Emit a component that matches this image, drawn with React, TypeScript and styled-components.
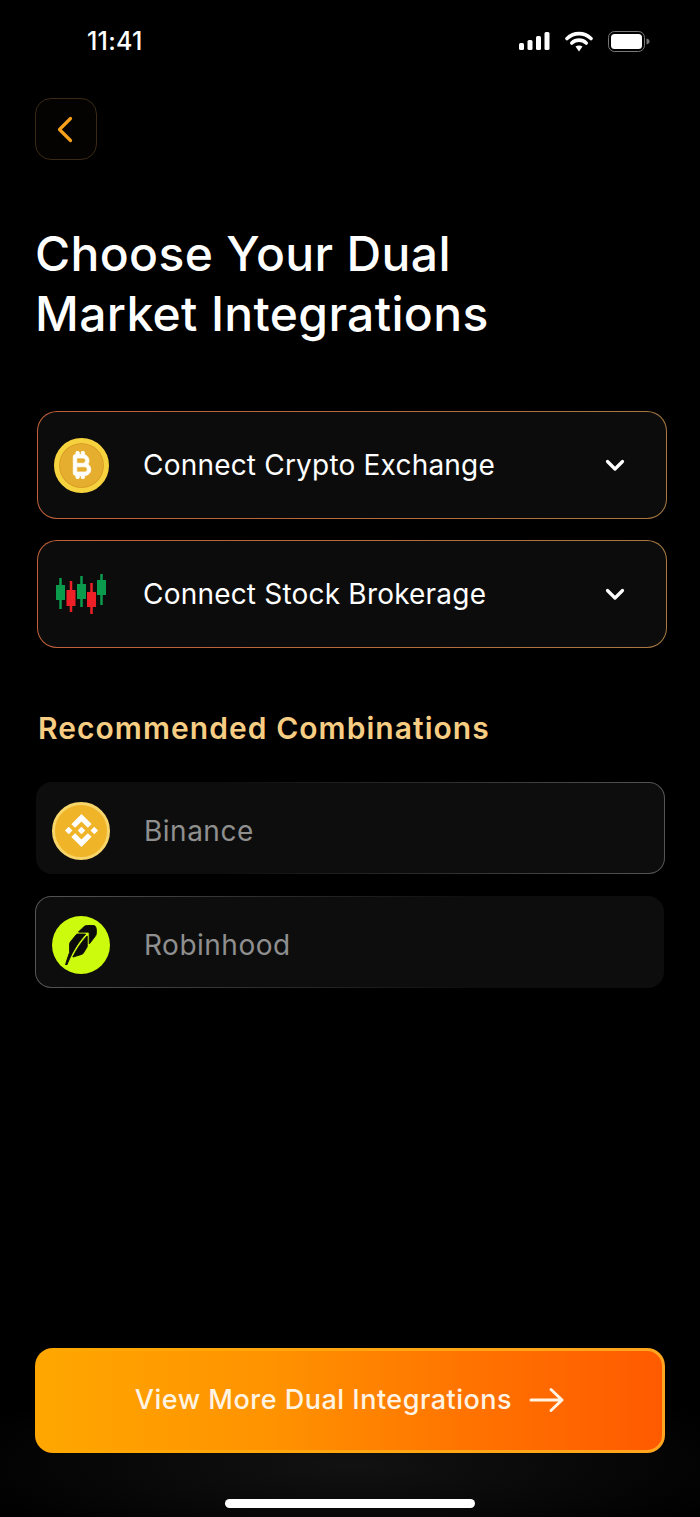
import React from "react";
import styled, { createGlobalStyle } from "styled-components";
import { FaBitcoinSign } from "react-icons/fa6";
import { SiBinance, SiRobinhood } from "react-icons/si";

const GlobalStyle = createGlobalStyle`
  html, body {
    margin: 0;
    padding: 0;
    background: #000;
  }
  * {
    box-sizing: border-box;
  }
`;

const Candles = () => {
  const items = [
    { x: 4.5, top: 4, bottom: 35, y: 11, h: 15, c: "#0b9b4d" },
    { x: 15, top: 7, bottom: 38, y: 16, h: 16, c: "#ee2027" },
    { x: 25.5, top: 2, bottom: 33, y: 10, h: 15, c: "#0b9b4d" },
    { x: 35.5, top: 9, bottom: 40, y: 18, h: 15, c: "#ee2027" },
    { x: 45.5, top: 0, bottom: 31, y: 6, h: 15, c: "#0b9b4d" },
  ];
  return (
    <svg width="52" height="40" viewBox="-1 0 52 40">
      {items.map((i) => (
        <g key={i.x}>
          <rect x={i.x - 1.25} y={i.top} width="2.5" height={i.bottom - i.top} fill={i.c} />
          <rect x={i.x - 4.5} y={i.y} width="9" height={i.h} fill={i.c} />
        </g>
      ))}
    </svg>
  );
};

const App = () => {
  return (
    <Page>
      <GlobalStyle />
      <StatusBar>
        <Time>11:41</Time>
        <StatusIcons>
          <svg width="31" height="18" viewBox="0 0 31 18">
            <rect x="0" y="11" width="5" height="7" rx="1.5" fill="#fff" />
            <rect x="8.5" y="8" width="5" height="10" rx="1.5" fill="#fff" />
            <rect x="17" y="4" width="5" height="14" rx="1.5" fill="#fff" />
            <rect x="25.5" y="0" width="5" height="18" rx="1.5" fill="#fff" />
          </svg>
          <svg width="28" height="21" viewBox="0 0 28 21" fill="none">
            <path d="M2 7.5C9 1 19 1 26 7.5" stroke="#fff" strokeWidth="3.6" strokeLinecap="round" />
            <path d="M6.8 12C11 8.2 17 8.2 21.2 12" stroke="#fff" strokeWidth="3.6" strokeLinecap="round" />
            <path d="M10.5 15.6 14 20.5l3.5-4.9c-2-1.6-5-1.6-7 0z" fill="#fff" />
          </svg>
          <svg width="42" height="21" viewBox="0 0 42 21">
            <rect x="0.5" y="0.5" width="36" height="20" rx="6" fill="none" stroke="#77787a" />
            <rect x="3" y="3" width="31" height="15" rx="3.5" fill="#fff" />
            <path d="M38.5 7.5c2 .4 3 1.6 3 3s-1 2.6-3 3z" fill="#77787a" />
          </svg>
        </StatusIcons>
      </StatusBar>

      <BackButton>
        <svg width="16" height="27" viewBox="0 0 16 27" fill="none">
          <path d="M13.5 2.5 2.5 13.5l11 11" stroke="#f9a11b" strokeWidth="3.2" strokeLinecap="round" strokeLinejoin="round" />
        </svg>
      </BackButton>

      <Title>
        Choose Your Dual
        <br />
        Market Integrations
      </Title>

      <Selects>
        <SelectCard>
          <IconSlot>
            <BitcoinCoin>
              <BitcoinGlyph size={28} color="#fff" />
            </BitcoinCoin>
          </IconSlot>
          <SelectLabel>Connect Crypto Exchange</SelectLabel>
          <Chevron />
        </SelectCard>
        <SelectCard>
          <IconSlot>
            <Candles />
          </IconSlot>
          <SelectLabel>Connect Stock Brokerage</SelectLabel>
          <Chevron />
        </SelectCard>
      </Selects>

      <SectionTitle>Recommended Combinations</SectionTitle>

      <Combos>
        <ComboRow $edge="right">
          <BinanceCoin>
            <SiBinance size={33} color="#fff" />
          </BinanceCoin>
          <ComboLabel>Binance</ComboLabel>
        </ComboRow>
        <ComboRow $edge="left">
          <RobinhoodCoin>
            <FeatherGlyph size={40} color="#0b0b0b" />
          </RobinhoodCoin>
          <ComboLabel>Robinhood</ComboLabel>
        </ComboRow>
      </Combos>

      <Footer>
        <CtaButton>
          View More Dual Integrations
          <svg width="36" height="26" viewBox="0 0 36 26" fill="none">
            <path
              d="M2 13h31M22 2.5 33 13 22 23.5"
              stroke="#fff4e4"
              strokeWidth="3"
              strokeLinecap="round"
              strokeLinejoin="round"
            />
          </svg>
        </CtaButton>
        <HomeIndicator />
      </Footer>
    </Page>
  );
};

const Chevron = () => (
  <ChevronWrap>
    <svg width="20" height="13" viewBox="0 0 20 13" fill="none">
      <path d="M2.5 2.5 10 10l7.5-7.5" stroke="#fff" strokeWidth="3.2" strokeLinecap="round" strokeLinejoin="round" />
    </svg>
  </ChevronWrap>
);

export default App;

const Page = styled.div`
  width: 700px;
  height: 1517px;
  overflow: hidden;
  display: flex;
  flex-direction: column;
  background: radial-gradient(ellipse 420px 90px at 350px 1465px, #121212 0%, #000 100%);
  font-family: "Inter", "Liberation Sans", sans-serif;
  color: #fff;
`;

const StatusBar = styled.div`
  height: 82px;
  flex-shrink: 0;
  display: flex;
  align-items: center;
  justify-content: space-between;
  padding: 0 50px 0 87px;
`;

const Time = styled.div`
  font-size: 25px;
  font-weight: 500;
  letter-spacing: 0.2px;
`;

const StatusIcons = styled.div`
  display: flex;
  align-items: center;
  gap: 15px;
`;

const BackButton = styled.div`
  width: 62px;
  height: 62px;
  margin: 16px 0 0 35px;
  flex-shrink: 0;
  border: 1.5px solid #3a2a14;
  border-radius: 16px;
  background: #040302;
  display: flex;
  align-items: center;
  justify-content: center;
  padding-right: 2px;
`;

const Title = styled.h1`
  margin: 64px 0 0 35px;
  font-size: 48px;
  font-weight: 500;
  line-height: 60px;
  letter-spacing: 0.35px;
  color: #fff;
`;

const Selects = styled.div`
  margin: 67px 33px 0 37px;
  display: flex;
  flex-direction: column;
  gap: 21px;
`;

const SelectCard = styled.div`
  height: 108px;
  display: flex;
  align-items: center;
  border: 1.5px solid transparent;
  border-radius: 20px;
  background:
    linear-gradient(#0c0c0d, #0c0c0d) padding-box,
    linear-gradient(90deg, #c0603a 0%, #b86a3a 50%, #a87a42 100%) border-box;
`;

const IconSlot = styled.div`
  width: 105px;
  padding-left: 17px;
  flex-shrink: 0;
  display: flex;
  align-items: center;
`;

const BitcoinCoin = styled.div`
  width: 55px;
  height: 55px;
  margin-left: -1px;
  border-radius: 50%;
  background: #e5ae2e;
  border: 5px solid #f6d23f;
  box-shadow: inset 0 0 0 1px #d99f25;
  display: flex;
  align-items: center;
  justify-content: center;
`;

const BitcoinGlyph = styled(FaBitcoinSign)`
  stroke: #fff;
  stroke-width: 14;
`;

const SelectLabel = styled.div`
  flex: 1;
  font-size: 28px;
  font-weight: 400;
  letter-spacing: 0.2px;
  color: #fff;
`;

const ChevronWrap = styled.div`
  margin-right: 41px;
  display: flex;
`;

const SectionTitle = styled.h2`
  margin: 62px 0 0 38px;
  font-size: 30px;
  font-weight: 600;
  line-height: 36px;
  letter-spacing: 1.05px;
  color: #f6cd83;
`;

const Combos = styled.div`
  margin: 36px 35px 0 35px;
  display: flex;
  flex-direction: column;
  gap: 22px;
`;

const ComboRow = styled.div<{ $edge: "left" | "right" }>`
  height: 92px;
  display: flex;
  align-items: center;
  padding: 5px 0 0 16px;
  gap: 34px;
  border: 1.5px solid transparent;
  border-radius: 16px;
  margin-left: ${(p) => (p.$edge === "right" ? "1px" : "0")};
  margin-right: ${(p) => (p.$edge === "left" ? "1px" : "0")};
  background:
    linear-gradient(#0d0d0d, #0d0d0d) padding-box,
    linear-gradient(
        ${(p) => (p.$edge === "right" ? "90deg" : "270deg")},
        #0d0d0d 0%,
        #0d0d0d 30%,
        #2e2e2e 65%,
        #565656 100%
      )
      border-box;
`;

const BinanceCoin = styled.div`
  width: 58px;
  height: 58px;
  margin-left: -1px;
  border-radius: 50%;
  background: #f0b429;
  border: 3px solid #f8d568;
  display: flex;
  align-items: center;
  justify-content: center;
`;

const RobinhoodCoin = styled.div`
  width: 58px;
  height: 58px;
  border-radius: 50%;
  background: #ccfb0e;
  display: flex;
  align-items: center;
  justify-content: center;
`;

const FeatherGlyph = styled(SiRobinhood)`
  stroke: #0b0b0b;
  stroke-width: 0.5;
`;

const ComboLabel = styled.div`
  font-size: 28px;
  font-weight: 400;
  letter-spacing: 0.5px;
  color: #8f8f8f;
`;

const Footer = styled.div`
  margin-top: auto;
  padding: 0 35px 9px;
  display: flex;
  flex-direction: column;
  align-items: center;
`;

const CtaButton = styled.div`
  width: 630px;
  height: 105px;
  padding-bottom: 2px;
  border: 3px solid transparent;
  border-radius: 18px;
  background:
    linear-gradient(90deg, #ffa700 0%, #ff9200 38%, #ff7200 70%, #ff5a00 100%) padding-box,
    linear-gradient(90deg, #ffa700, #ffa51f) border-box;
  display: flex;
  align-items: center;
  justify-content: center;
  gap: 17px;
  font-size: 27px;
  font-weight: 500;
  letter-spacing: 0.5px;
  color: #fff4e4;
`;

const HomeIndicator = styled.div`
  width: 250px;
  height: 9px;
  margin-top: 46px;
  border-radius: 5px;
  background: #fff;
`;
